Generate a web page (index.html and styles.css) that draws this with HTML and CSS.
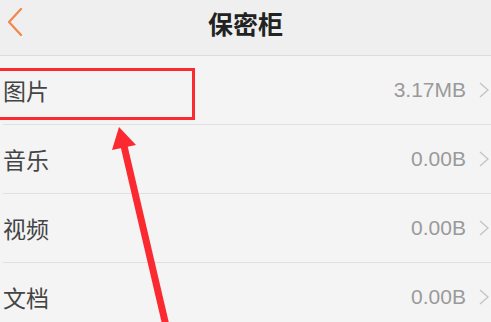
FILE: index.html
```html
<!DOCTYPE html>
<html lang="zh-CN">
<head>
    <meta charset="UTF-8">
    <meta name="viewport" content="width=device-width, initial-scale=1.0">
    <title>保密柜</title>
    <link rel="stylesheet" href="styles.css">
</head>
<body>
    <div class="header">
        <svg class="back" width="16" height="28" viewBox="0 0 16 28">
            <polyline points="14,1 2,14 14,27" fill="none" stroke="#f0874a" stroke-width="2.2" stroke-linecap="round" stroke-linejoin="round"/>
        </svg>
        <h1>保密柜</h1>
    </div>

    <div class="list">
        <div class="row">
            <span class="label">图片</span>
            <span class="value">3.17MB</span>
            <svg class="chevron" width="10" height="16" viewBox="0 0 10 16"><polyline points="1,1 9,8 1,15" fill="none" stroke="#c4c4c4" stroke-width="1.4"/></svg>
        </div>
        <div class="row">
            <span class="label">音乐</span>
            <span class="value">0.00B</span>
            <svg class="chevron" width="10" height="16" viewBox="0 0 10 16"><polyline points="1,1 9,8 1,15" fill="none" stroke="#c4c4c4" stroke-width="1.4"/></svg>
        </div>
        <div class="row">
            <span class="label">视频</span>
            <span class="value">0.00B</span>
            <svg class="chevron" width="10" height="16" viewBox="0 0 10 16"><polyline points="1,1 9,8 1,15" fill="none" stroke="#c4c4c4" stroke-width="1.4"/></svg>
        </div>
        <div class="row">
            <span class="label">文档</span>
            <span class="value">0.00B</span>
            <svg class="chevron" width="10" height="16" viewBox="0 0 10 16"><polyline points="1,1 9,8 1,15" fill="none" stroke="#c4c4c4" stroke-width="1.4"/></svg>
        </div>
    </div>

    <!-- annotation marks -->
    <div class="mark-box"></div>
    <svg class="mark-arrow" width="491" height="322" viewBox="0 0 491 322">
        <line x1="124" y1="146" x2="167" y2="330" stroke="#fb2a30" stroke-width="7"/>
        <polygon points="119,127 112,150 136,145" fill="#fb2a30"/>
    </svg>
</body>
</html>
```

FILE: styles.css
```css
body {
    margin: 0;
    width: 491px;
    height: 322px;
    overflow: hidden;
    background: #f4f4f4;
    font-family: "Noto Sans", "Noto Sans CJK SC", sans-serif;
    position: relative;
}
.header {
    height: 55px;
    background: #efefef;
    border-bottom: 1px solid #dcdcdc;
    display: flex;
    align-items: center;
    justify-content: center;
    position: relative;
}
.header h1 {
    margin: 0;
    font-size: 25px;
    font-weight: bold;
    color: #222;
    font-family: "Noto Sans CJK SC", sans-serif;
    padding-bottom: 10px;
}
.back {
    position: absolute;
    left: 7px;
    top: 8px;
}
.list {
    padding-left: 3px;
}
.row {
    height: 68px;
    border-bottom: 1px solid #e0e0e0;
    display: flex;
    align-items: center;
}
.label {
    flex: 1;
    font-size: 23px;
    color: #444;
    font-family: "Noto Sans CJK SC", sans-serif;
}
.value {
    font-size: 21px;
    color: #9a9a9a;
    font-family: "Liberation Sans", "Noto Sans", sans-serif;
    margin-right: 13px;
}
.chevron {
    margin-right: 2px;
}
.mark-box {
    position: absolute;
    left: -3px;
    top: 68px;
    width: 192px;
    height: 46px;
    border: 3px solid #fb2a30;
}
.mark-arrow {
    position: absolute;
    left: 0;
    top: 0;
}
```
